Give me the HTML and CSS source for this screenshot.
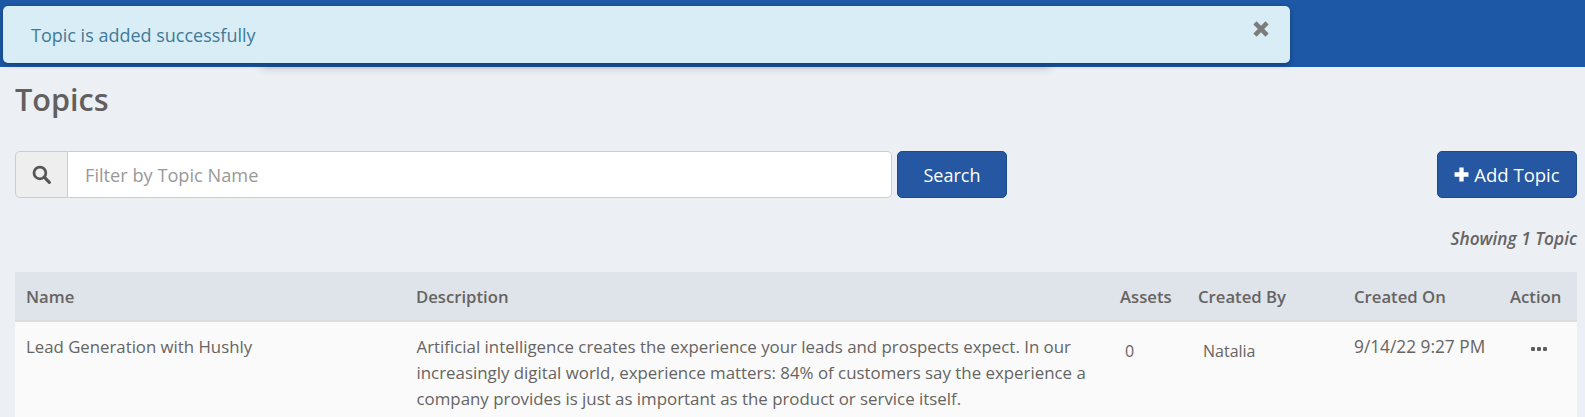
FILE: index.html
```html
<!DOCTYPE html>
<html lang="en">
<head>
    <meta charset="UTF-8">
    <title>Topics</title>
    <link rel="stylesheet" href="styles.css">
</head>
<body>
    <header class="top-bar"></header>

    <div class="toast-shade"></div>
    <div class="toast">
        <span>Topic is added successfully</span>
        <svg class="toast-close" viewBox="0 0 16 16"><path d="M1.2 4L4 1.2 8 5.2l4-4L14.8 4l-4 4 4 4-2.8 2.8-4-4-4 4L1.2 12l4-4z" fill="currentColor"/></svg>
    </div>

    <main class="page">
        <h1>Topics</h1>

        <div class="toolbar">
            <div class="search-group">
                <span class="search-addon">
                    <svg viewBox="0 0 18 18"><circle cx="7.5" cy="7.5" r="5.6" fill="none" stroke="currentColor" stroke-width="2.6"/><path d="M11.6 11.6l4.800 4.800" stroke="currentColor" stroke-width="3" stroke-linecap="round"/></svg>
                </span>
                <input type="text" class="search-input" placeholder="Filter by Topic Name">
            </div>
            <button class="btn btn-search">Search</button>
            <button class="btn btn-add">
                <svg viewBox="0 0 14 14"><path d="M5 0.5h4v4.500h4.500v4H9v4.500H5V9H0.500V5H5z" fill="currentColor"/></svg>
                Add Topic
            </button>
        </div>

        <p class="count">Showing 1 Topic</p>

        <table class="topics">
            <colgroup>
                <col class="col-name">
                <col class="col-desc">
                <col class="col-assets">
                <col class="col-by">
                <col class="col-on">
                <col class="col-action">
            </colgroup>
            <thead>
                <tr>
                    <th>Name</th>
                    <th>Description</th>
                    <th>Assets</th>
                    <th>Created By</th>
                    <th>Created On</th>
                    <th>Action</th>
                </tr>
            </thead>
            <tbody>
                <tr>
                    <td>Lead Generation with Hushly</td>
                    <td class="desc">Artificial intelligence creates the experience your leads and prospects expect. In our increasingly digital world, experience matters: 84% of customers say the experience a company provides is just as important as the product or service itself.</td>
                    <td><span class="inset">0</span></td>
                    <td><span class="inset">Natalia</span></td>
                    <td class="date">9/14/22 9:27 PM</td>
                    <td>
                        <svg class="dots" viewBox="0 0 16 4"><rect x="0" y="0" width="4" height="4" rx="1.200"/><rect x="6" y="0" width="4" height="4" rx="1.200"/><rect x="12" y="0" width="4" height="4" rx="1.200"/></svg>
                    </td>
                </tr>
            </tbody>
        </table>
    </main>
</body>
</html>
```

FILE: styles.css
```css
html, body {
    height: 417px;
    overflow: hidden;
}

body {
    font-family: "Open Sans", Arial, sans-serif;
    font-size: 16.8px;
    margin: 0;
    padding: 0;
    background: #eceff4;
    color: #666462;
}

.top-bar {
    height: 67px;
    background: #1c58a5;
}

.toast {
    position: absolute;
    left: 3px;
    top: 6px;
    width: 1287px;
    height: 57px;
    box-sizing: border-box;
    padding: 0 20px 0 28px;
    display: flex;
    align-items: center;
    justify-content: space-between;
    background: #d9edf7;
    color: #3f7a96;
    font-size: 18px;
    border-radius: 5px;
    box-shadow: 0 2px 5px rgba(0, 0, 0, 0.3);
}

.toast-close {
    width: 18px;
    height: 18px;
    margin-bottom: 11px;
    color: #7c7c7c;
}

/* the menu behind the alert only shows as a shadow under the bar */
.toast-shade {
    position: absolute;
    left: 262px;
    top: 40px;
    width: 788px;
    height: 25px;
    box-shadow: 0 3px 8px rgba(40, 50, 70, 0.22);
}

.page {
    padding: 0 8px 0 15px;
}

h1 {
    margin: 0;
    padding-top: 12px;
    font-size: 30.6px;
    font-weight: 600;
    line-height: 41px;
    color: #625f5e;
}

.toolbar {
    display: flex;
    align-items: stretch;
    height: 47px;
    margin-top: 31px;
}

.search-group {
    display: flex;
    width: 877px;
}

.search-addon {
    width: 51px;
    display: flex;
    align-items: center;
    justify-content: center;
    background: #eeeeee;
    border: 1px solid #cccccc;
    border-radius: 5px 0 0 5px;
    color: #555555;
}

.search-addon svg {
    width: 19px;
    height: 19px;
}

.search-input {
    flex: 1;
    min-width: 0;
    box-sizing: border-box;
    padding: 0 17px;
    border: 1px solid #cccccc;
    border-left: none;
    border-radius: 0 5px 5px 0;
    background: #fff;
    font-family: inherit;
    font-size: 18.2px;
    outline: none;
}

.search-input::placeholder {
    color: #999999;
    opacity: 1;
}

.btn {
    background: #2557a3;
    color: #fff;
    border: 1px solid #1c4a8f;
    border-radius: 5px;
    font-family: inherit;
    font-size: 18px;
    padding: 0;
}

.btn-search {
    width: 110px;
    margin-left: 5px;
}

.btn-add {
    width: 140px;
    margin-left: auto;
    display: flex;
    align-items: center;
    justify-content: center;
    gap: 5px;
    font-size: 18.5px;
}

.btn-add svg {
    width: 15px;
    height: 15px;
}

.count {
    margin: 31px 0 0;
    text-align: right;
    font-size: 17.3px;
    font-style: italic;
    font-weight: 600;
    line-height: 20px;
    color: #666462;
}

.topics {
    width: 1562px;
    margin-top: 23px;
    table-layout: fixed;
    border-collapse: collapse;
}

.col-name { width: 390px; }
.col-desc { width: 704px; }
.col-assets { width: 78px; }
.col-by { width: 156px; }
.col-on { width: 156px; }
.col-action { width: 78px; }

.topics th {
    height: 48px;
    padding: 0 11px;
    background: #dfe3ea;
    border-bottom: 2px solid #dddddd;
    text-align: left;
    font-size: 16.7px;
    font-weight: 600;
    white-space: nowrap;
}

.topics td {
    padding: 12px 11px;
    background: #fafafa;
    vertical-align: top;
    line-height: 26px;
}

.topics .desc {
    font-size: 16.87px;
    padding-left: 11.5px;
}

.topics .date {
    font-size: 17.3px;
}

.inset {
    display: inline-block;
    padding: 4px 0 0 5px;
    font-size: 16px;
}

.dots {
    display: block;
    width: 16px;
    height: 4px;
    margin: 13px 0 0 21px;
    fill: #5e5c5b;
}
```
